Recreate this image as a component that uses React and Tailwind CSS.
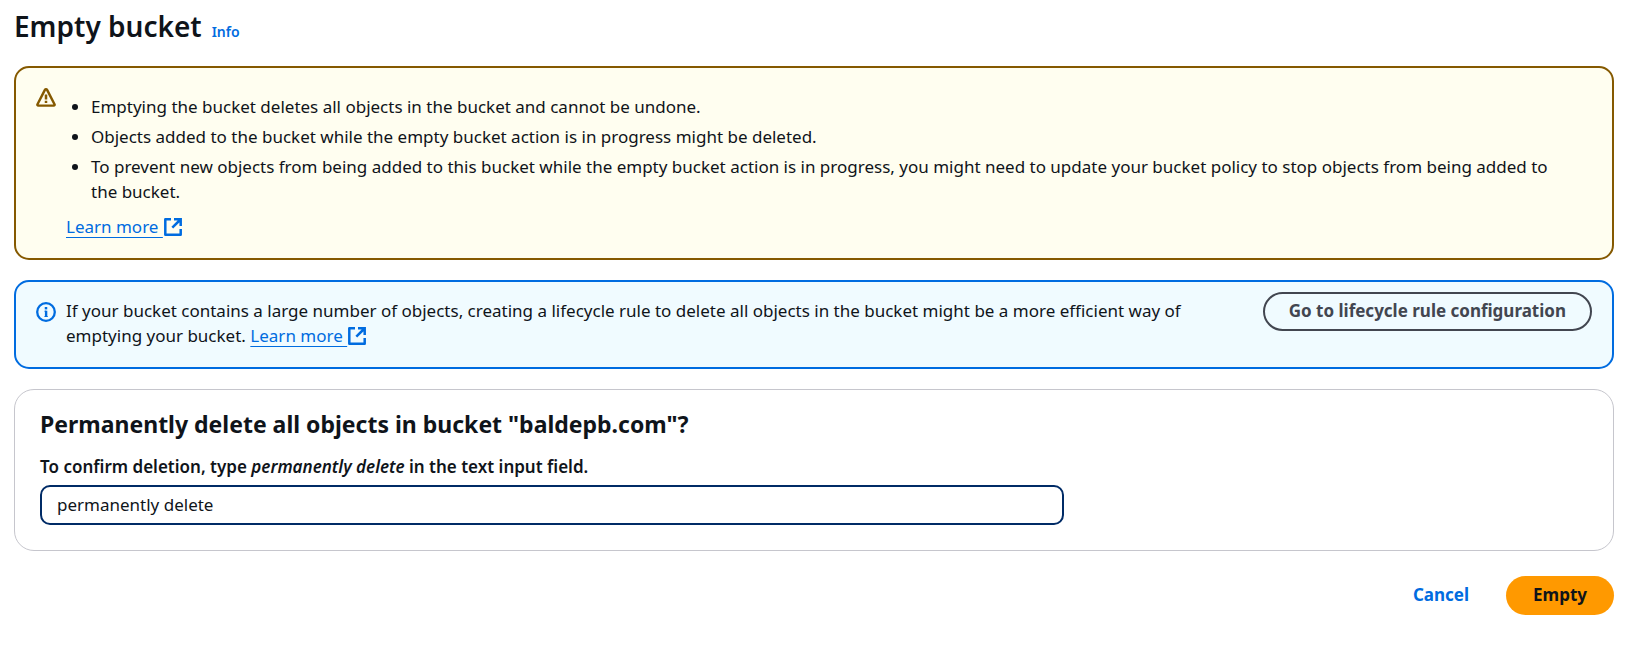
import { useState } from "react";

function WarningIcon() {
  return (
    <svg viewBox="0 0 20 20" className="size-5" fill="none" stroke="currentColor" strokeWidth="2.4" aria-hidden="true">
      <path d="M8.9 1.9 1.5 16.2c-.4.8 0 1.4.8 1.4h15.4c.8 0 1.2-.6.8-1.4L11.1 1.9c-.5-.9-1.7-.9-2.2 0z" strokeLinejoin="round" />
      <path d="M10 6.5v5M10 12.7v2.3" strokeWidth="2.5" />
    </svg>
  );
}

function InfoIcon() {
  return (
    <svg viewBox="0 0 20 20" className="size-5" fill="none" stroke="currentColor" aria-hidden="true">
      <circle cx="10" cy="10" r="8.8" strokeWidth="2.3" />
      <path d="M10 5v2.4" strokeWidth="2.5" />
      <path d="M10.1 8.7V15" strokeWidth="2.4" />
      <path d="M8.4 9.2H10M8.4 14.5h3.4" strokeWidth="0.9" />
    </svg>
  );
}

function ExternalIcon() {
  return (
    <svg viewBox="0 0 20 20" className="inline size-5 align-[-4px]" fill="none" stroke="currentColor" strokeWidth="2.5" aria-hidden="true">
      <path d="M8 2.3H2.3v15.4h15.4V12" strokeLinejoin="round" />
      <path d="M11 2.3h6.7V9M17.5 2.5 9.3 10.7" />
    </svg>
  );
}

function LearnMore() {
  return (
    <a href="#learn-more" className="text-[#006ce0] underline decoration-1 underline-offset-4">
      Learn more&nbsp;<ExternalIcon />
    </a>
  );
}

export default function App() {
  const [value, setValue] = useState("permanently delete");
  return (
    <main className="flex flex-col gap-5 bg-white pt-2 pr-[13px] pb-10 pl-3.5 font-['Noto_Sans',sans-serif] text-[17px] leading-[25px] text-[#0f141a]">
      <header className="flex items-baseline gap-2.5">
        <h1 className="text-[28px] leading-9 font-semibold">Empty bucket</h1>
        <a href="#info" className="text-sm font-semibold text-[#006ce0]">Info</a>
      </header>

      <section className="mt-0.5 flex gap-2.5 rounded-[15px] border-2 border-[#855900] bg-[#fffef0] px-5 pt-4 pb-[19px]">
        <span className="pt-1 text-[#855900]"><WarningIcon /></span>
        <div className="flex-1 pr-10">
          <ul className="flex list-disc flex-col gap-[5px] py-2.5 pl-[25px]">
            <li>Emptying the bucket deletes all objects in the bucket and cannot be undone.</li>
            <li>Objects added to the bucket while the empty bucket action is in progress might be deleted.</li>
            <li>To prevent new objects from being added to this bucket while the empty bucket action is in progress, you might need to update your bucket policy to stop objects from being added to the bucket.</li>
          </ul>
          <LearnMore />
        </div>
      </section>

      <section className="flex items-start gap-2.5 rounded-[15px] border-2 border-[#006ce0] bg-[#f0fbff] px-5 pt-2.5 pb-[19px]">
        <span className="pt-2.5 text-[#006ce0]"><InfoIcon /></span>
        <p className="flex-1 pt-[6px] pr-14">
          If your bucket contains a large number of objects, creating a lifecycle rule to delete all objects in the bucket might be a more efficient way of emptying your bucket. <LearnMore />
        </p>
        <button type="button" className="rounded-full border-2 border-[#424650] px-6 pt-1 pb-[6px] font-bold text-[#424650]">
          Go to lifecycle rule configuration
        </button>
      </section>

      <section className="rounded-[20px] border border-[#c6c6cd] px-[25px] pt-[19px] pb-[25px]">
        <h2 className="text-[23px] leading-[30px] font-bold">Permanently delete all objects in bucket "baldepb.com"?</h2>
        <label htmlFor="confirm" className="mt-[15px] block font-semibold">
          To confirm deletion, type <em>permanently delete</em> in the text input field.
        </label>
        <div className="mt-[6px] grid grid-cols-3 gap-[25px]">
          <input
            id="confirm"
            type="text"
            value={value}
            onChange={(e) => setValue(e.target.value)}
            className="col-span-2 h-10 rounded-[10px] border-2 border-[#002b66] px-[15px] pb-0.5 outline-none"
          />
        </div>
      </section>

      <footer className="flex justify-end gap-2.5 pt-[5px]">
        <button type="button" className="rounded-full px-[27px] pt-[6px] pb-2 font-bold text-[#006ce0]">Cancel</button>
        <button type="button" className="rounded-full bg-[#ff9900] px-[27px] pt-[6px] pb-2 font-bold">Empty</button>
      </footer>
    </main>
  );
}
